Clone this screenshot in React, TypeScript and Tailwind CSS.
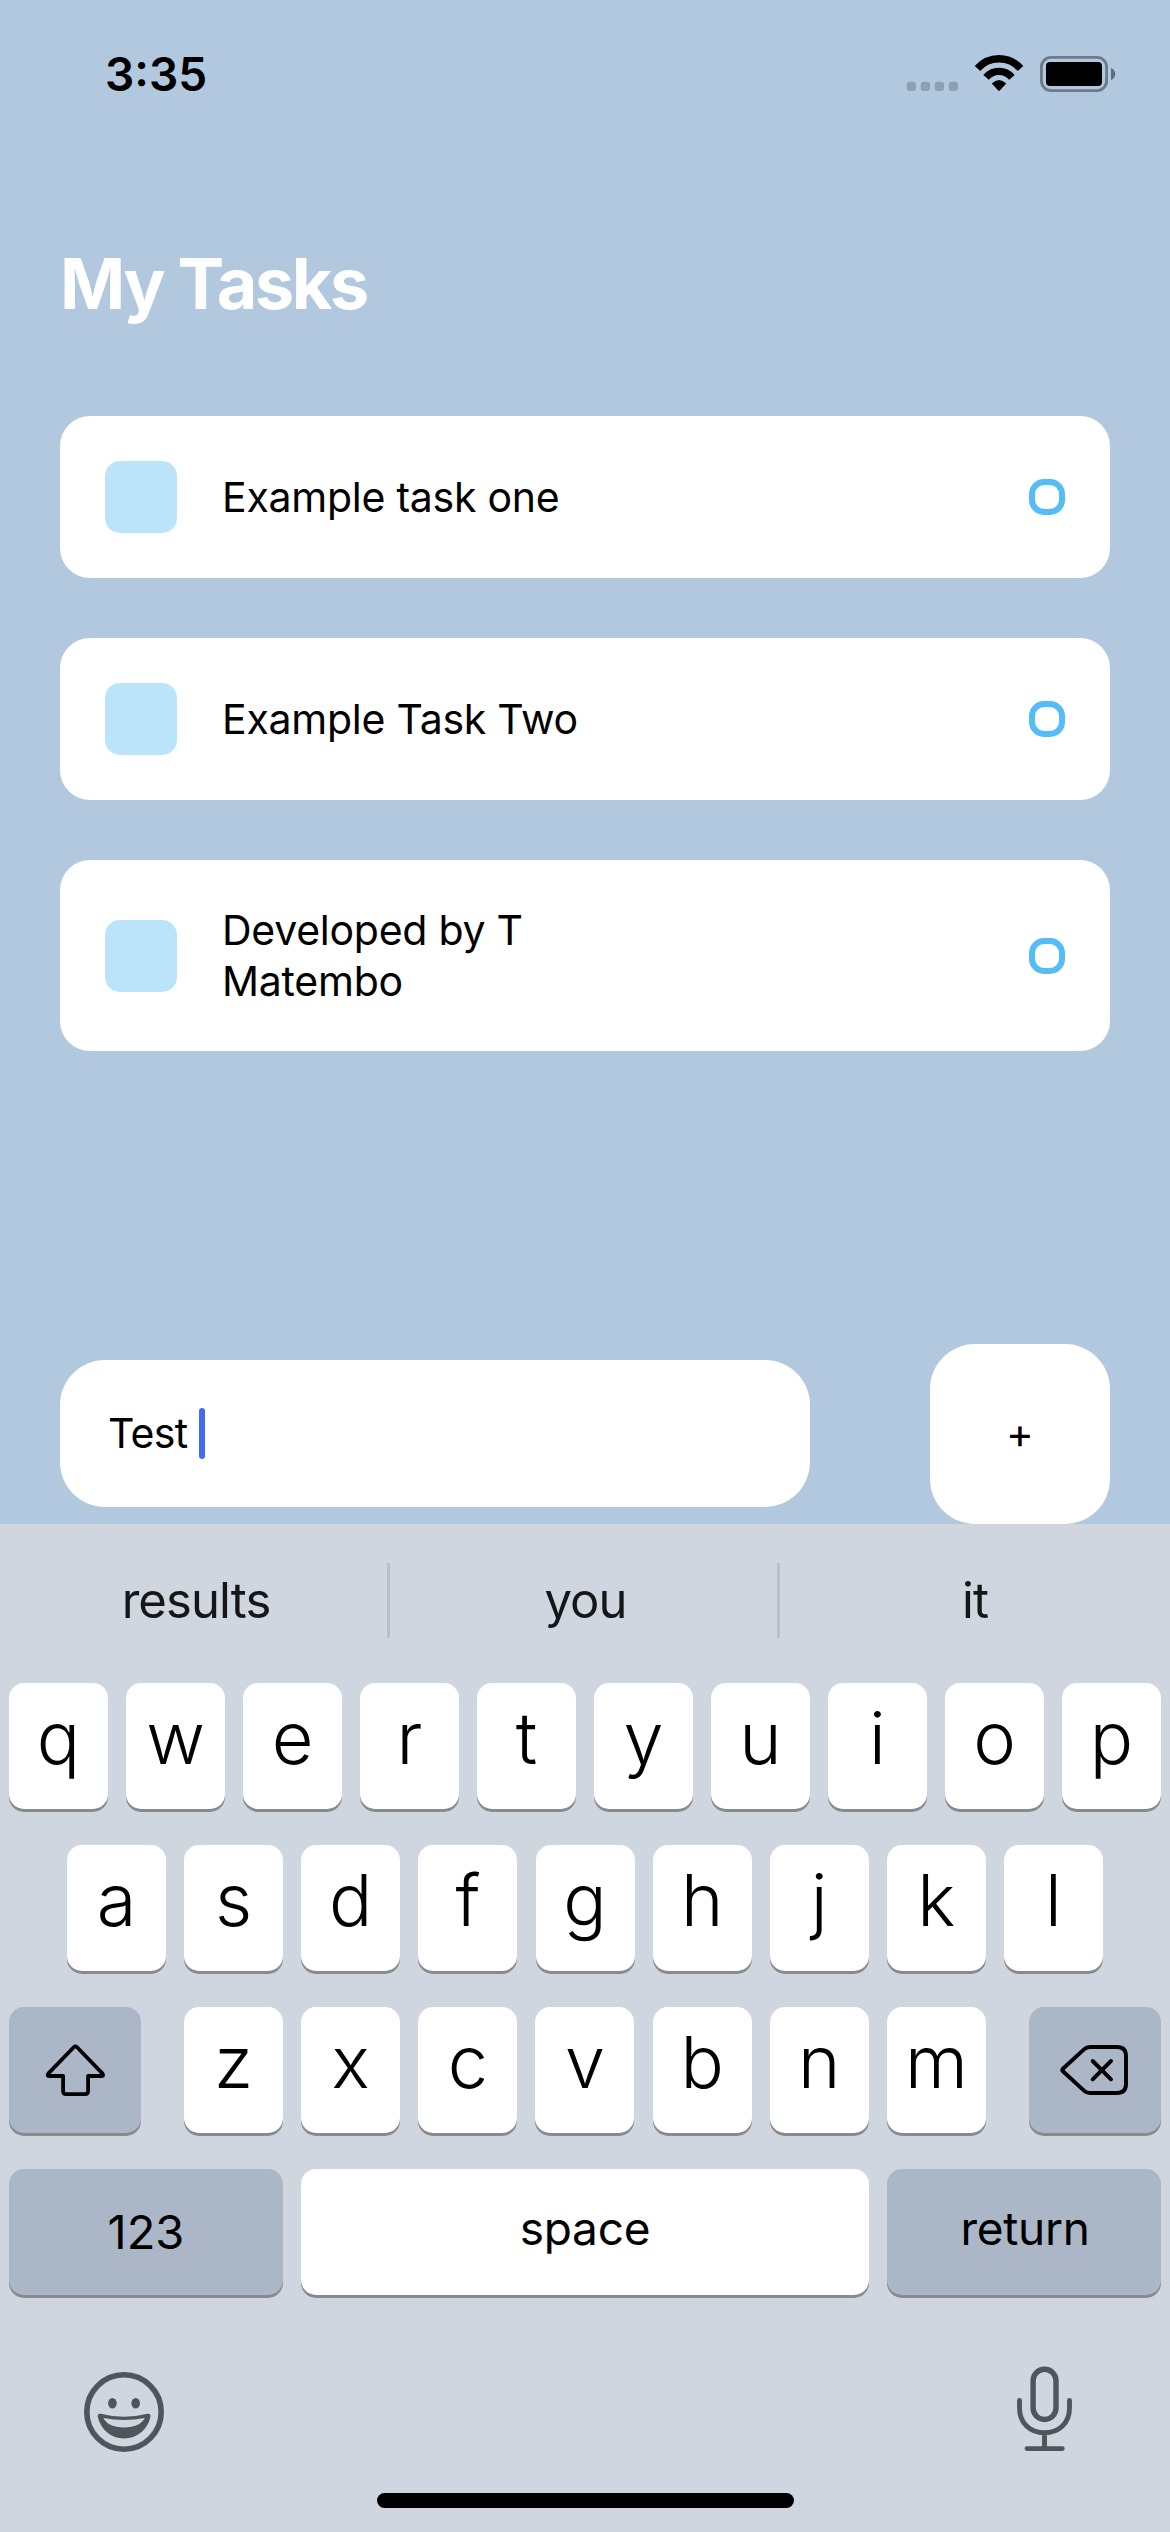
import React from "react";

const TASKS: string[][] = [
  ["Example task one"],
  ["Example Task Two"],
  ["Developed by T", "Matembo"],
];

function StatusIcons() {
  return (
    <svg width="210" height="38" viewBox="0 0 210 38" fill="none">
      {[0.7, 14.7, 28.7, 42.7].map((x) => (
        <rect key={x} x={x} y="26.7" width="9.3" height="9.3" rx="3" fill="#8f9fb2" />
      ))}
      <path d="M71.5 13.45A28.6 28.6 0 0 1 114.5 13.45" stroke="#000" strokeWidth="7.4" />
      <path d="M80.1 22.3A16.9 16.9 0 0 1 105.9 22.3" stroke="#000" strokeWidth="7.3" />
      <path d="M85.7 28.6Q93 21.6 100.3 28.6L93.7 35.6Q93 36.3 92.3 35.6Z" fill="#000" />
      <rect x="135.4" y="2.4" width="65.2" height="33.2" rx="9.5" stroke="#6d7a89" strokeWidth="2.8" />
      <rect x="140" y="7" width="56" height="24" rx="4" fill="#000" />
      <path d="M205 13Q209.2 14.8 209.2 19T205 25Z" fill="#5f6b79" />
    </svg>
  );
}

function TaskCard({ lines }: { lines: string[] }) {
  return (
    <li className="flex items-center rounded-[30px] bg-white px-[45px] py-[45px]">
      <span className="size-[72px] shrink-0 rounded-[15px] bg-[#bbe4fb]" />
      <p className="ml-[45px] flex-1 text-[41px] leading-[50.5px] tracking-[-0.25px] whitespace-nowrap text-black">
        {lines.map((line) => (
          <span key={line} className="block">
            {line}
          </span>
        ))}
      </p>
      <span className="size-[36px] shrink-0 rounded-[15px] border-[6px] border-[#55bcf6]" />
    </li>
  );
}

function LetterKey({ label }: { label: string }) {
  return (
    <button className="flex h-[126px] w-[99px] items-center justify-center rounded-[15px] bg-white pb-[16px] text-[72px] leading-none font-[340] text-black shadow-[0_3px_0_#898a8d]">
      {label}
    </button>
  );
}

function ShiftIcon() {
  return (
    <svg width="64" height="56" viewBox="0 0 64 56" fill="none" stroke="#000" strokeWidth="3.8" strokeLinejoin="round">
      <path d="M31 5Q32.4 3.6 33.8 5L59.6 31.6Q61 34 58.6 34H45.1V49Q45.1 52.2 42 52.2H23.2Q20.1 52.2 20.1 49V34H6.2Q3.8 34 5.2 31.6Z" />
    </svg>
  );
}

function BackspaceIcon() {
  return (
    <svg width="72" height="56" viewBox="0 0 72 56" fill="none" stroke="#000" strokeWidth="3.9" strokeLinecap="round" strokeLinejoin="round">
      <path d="M31 5H58Q67 5 67 14V42Q67 51 58 51H31Q27.5 51 25 48.6L3.9 29.3Q2.7 28 3.9 26.7L25 7.4Q27.5 5 31 5Z" />
      <path d="M33.7 19L52 37.3M52 19L33.7 37.3" />
    </svg>
  );
}

function EmojiIcon() {
  return (
    <svg width="80" height="80" viewBox="0 0 80 80" fill="none">
      <circle cx="40" cy="40" r="37.2" stroke="#50555b" strokeWidth="5.6" />
      <ellipse cx="28.4" cy="31.2" rx="4.3" ry="5.2" fill="#50555b" />
      <ellipse cx="51.7" cy="31.2" rx="4.3" ry="5.2" fill="#50555b" />
      <path
        fill="#50555b"
        fillRule="evenodd"
        d="M16.7 41.8Q40 47.8 63.5 41.8Q67 41.4 66.4 45C63.5 58 53 66.4 40 66.4S17 58 13.8 45Q13.2 41.4 16.7 41.8ZM19.4 46Q24 55.3 40 55.4Q56 55.3 60.8 46Q40 50.2 19.4 46Z"
      />
    </svg>
  );
}

function MicIcon() {
  return (
    <svg width="55" height="86" viewBox="0 0 55 86" fill="none" stroke="#50555b" strokeLinecap="round">
      <rect x="16.1" y="3.3" width="22.9" height="50.2" rx="11.4" strokeWidth="5.4" />
      <path d="M2.5 34.5V42C2.5 57 13 66.8 27.5 66.8S52.5 57 52.5 42V34.5M27.5 66.8V82M10 82.6H45.3" strokeWidth="4.9" />
    </svg>
  );
}

export default function App() {
  return (
    <div className="flex h-[2532px] w-[1170px] flex-col overflow-hidden bg-[#b2c8df] font-['Inter',sans-serif]">
      <header className="flex h-[148px] shrink-0 items-center justify-between pr-[54px] pl-[105px]">
        <span className="text-[46px] leading-none font-[570] text-black">3:35</span>
        <StatusIcons />
      </header>

      <main className="flex h-[1376px] shrink-0 flex-col px-[60px]">
        <h1 className="mt-[94px] h-[84px] text-[70px] leading-[84px] font-bold tracking-[-2.4px] text-white">My Tasks</h1>
        <ul className="mt-[90px] flex flex-col gap-[60px]">
          {TASKS.map((lines) => (
            <TaskCard key={lines[0]} lines={lines} />
          ))}
        </ul>
        <div className="mt-auto flex items-center justify-between">
          <div className="mt-[-1px] flex h-[147px] w-[750px] items-center rounded-[45px] bg-white pl-[48px] text-[41px] leading-[51px] text-black">
            <span className="tracking-[-0.7px]">Test</span>
            <span className="ml-[12px] h-[51px] w-[6px] rounded-full bg-[#426bf2]" />
          </div>
          <button className="flex size-[180px] items-center justify-center rounded-[45px] bg-white pb-[3px] text-[42px] leading-none text-black">
            +
          </button>
        </div>
      </main>

      <section className="flex flex-1 flex-col bg-[#d0d6e0]">
        <div className="mt-[39px] flex h-[75px] items-center text-center text-[49px] leading-none tracking-[-0.9px] text-[#151617]">
          <span className="w-[387px] pl-[5px]">results</span>
          <span className="h-full w-[3px] bg-[#bbbfca]" />
          <span className="w-[387px] pl-[4px]">you</span>
          <span className="h-full w-[3px] bg-[#bbbfca]" />
          <span className="w-[390px]">it</span>
        </div>

        <div className="mt-[45px] flex flex-col gap-[36px] px-[9px]">
          <div className="flex justify-between">
            {"qwertyuiop".split("").map((c) => (
              <LetterKey key={c} label={c} />
            ))}
          </div>
          <div className="flex justify-between px-[58px]">
            {"asdfghjkl".split("").map((c) => (
              <LetterKey key={c} label={c} />
            ))}
          </div>
          <div className="flex justify-between">
            <button className="flex h-[126px] w-[132px] items-center justify-center rounded-[15px] bg-[#abb6c7] shadow-[0_3px_0_#898a8d]">
              <ShiftIcon />
            </button>
            <div className="flex w-[802px] justify-between">
              {"zxcvbnm".split("").map((c) => (
                <LetterKey key={c} label={c} />
              ))}
            </div>
            <button className="flex h-[126px] w-[132px] items-center justify-center rounded-[15px] bg-[#abb6c7] shadow-[0_3px_0_#898a8d]">
              <BackspaceIcon />
            </button>
          </div>
          <div className="flex gap-[18px] text-[46px] leading-none tracking-[-0.3px] text-black">
            <button className="flex h-[126px] w-[274px] items-center justify-center rounded-[15px] bg-[#abb6c7] pb-[1px] text-[47px] tracking-normal shadow-[0_3px_0_#898a8d]">
              123
            </button>
            <button className="flex h-[126px] flex-1 items-center justify-center rounded-[15px] bg-white pb-[8px] shadow-[0_3px_0_#898a8d]">
              space
            </button>
            <button className="flex h-[126px] w-[274px] items-center justify-center rounded-[15px] bg-[#abb6c7] pb-[8px] pl-[2px] shadow-[0_3px_0_#898a8d]">
              return
            </button>
          </div>
        </div>

        <div className="mt-[71px] flex items-center justify-between pr-[98px] pl-[84px]">
          <div className="pt-[6px]">
            <EmojiIcon />
          </div>
          <MicIcon />
        </div>
        <div className="mt-[41px] h-[15px] w-[417px] self-center rounded-full bg-black" />
      </section>
    </div>
  );
}
